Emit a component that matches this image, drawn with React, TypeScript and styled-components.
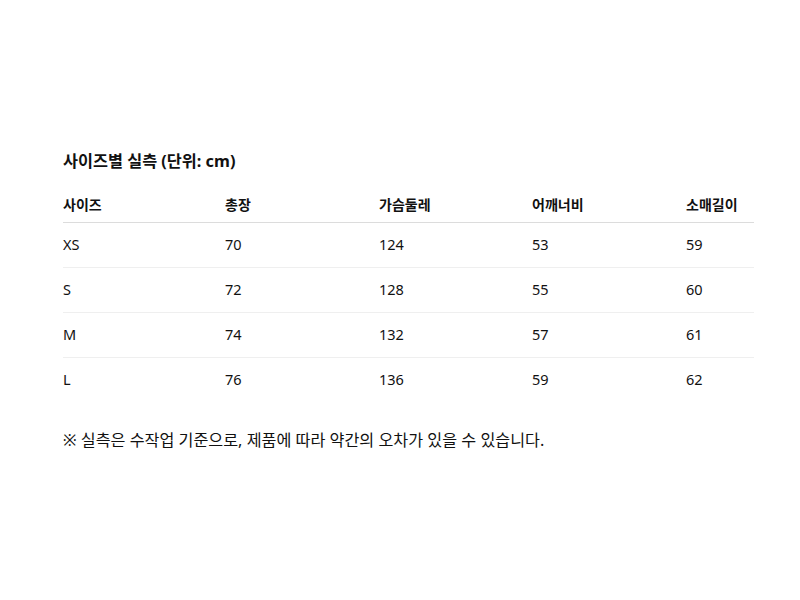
import React from 'react';
import styled, { createGlobalStyle } from 'styled-components';

const rows = [
  ['XS', '70', '124', '53', '59'],
  ['S', '72', '128', '55', '60'],
  ['M', '74', '132', '57', '61'],
  ['L', '76', '136', '59', '62'],
];

const headers = ['사이즈', '총장', '가슴둘레', '어깨너비', '소매길이'];

const GlobalStyle = createGlobalStyle`
  html, body {
    margin: 0;
    padding: 0;
    background: #fff;
  }
  body {
    font-family: "Noto Sans", "Noto Sans CJK KR", sans-serif;
    color: #111;
  }
`;

const App = () => (
  <>
    <GlobalStyle />
    <Page>
      <Section>
        <Title>사이즈별 실측 (단위: cm)</Title>
        <Table>
          <HeadRow>
            {headers.map(h => (
              <HeadCell key={h}>{h}</HeadCell>
            ))}
          </HeadRow>
          {rows.map((r, i) => (
            <Row key={r[0]} $last={i === rows.length - 1}>
              {r.map((c, j) => (
                <Cell key={j}>{c}</Cell>
              ))}
            </Row>
          ))}
        </Table>
        <Note>※ 실측은 수작업 기준으로, 제품에 따라 약간의 오차가 있을 수 있습니다.</Note>
      </Section>
    </Page>
  </>
);

const Page = styled.div`
  height: 600px;
  display: flex;
  align-items: center;
  padding-left: 63px;
`;

const Section = styled.section`
  width: 691px;
`;

const Title = styled.h2`
  margin: 0 0 16px;
  font-size: 16.3px;
  font-weight: 700;
  line-height: 24px;
`;

const Table = styled.div`
  display: flex;
  flex-direction: column;
`;

const cols = '162px 154px 153px 154px 1fr';

const HeadRow = styled.div`
  display: grid;
  grid-template-columns: ${cols};
  height: 34px;
  padding-bottom: 2px;
  align-items: center;
  border-bottom: 1px solid #dcdcdc;
  box-sizing: border-box;
`;

const HeadCell = styled.div`
  font-size: 14px;
  font-weight: 700;
`;

const Row = styled.div<{ $last: boolean }>`
  display: grid;
  grid-template-columns: ${cols};
  height: ${props => (props.$last ? '44px' : '45px')};
  padding-bottom: 2px;
  box-sizing: border-box;
  align-items: center;
  border-bottom: ${props => (props.$last ? 'none' : '1px solid #efefef')};
`;

const Cell = styled.div`
  font-size: 14.5px;
`;

const Note = styled.p`
  margin: 26px 0 0;
  font-size: 16.2px;
  line-height: 24px;
`;

export default App;
